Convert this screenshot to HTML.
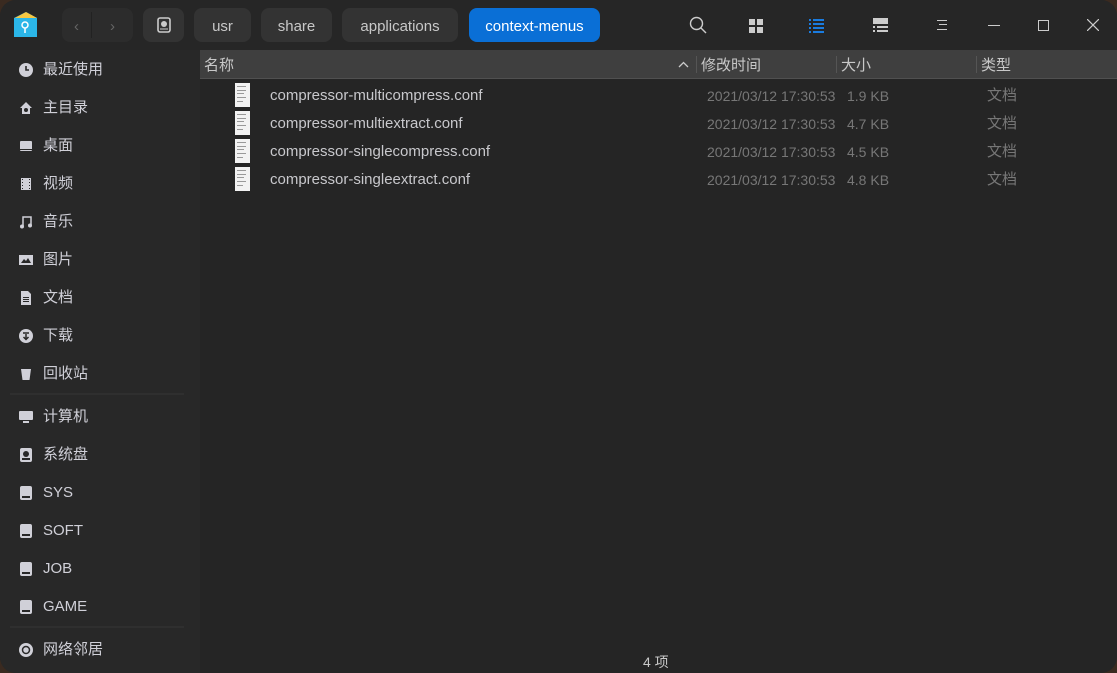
<!DOCTYPE html>
<html><head><meta charset="utf-8"><style>
*{margin:0;padding:0;box-sizing:border-box}
body{width:1117px;height:673px;background:#3a2a20;overflow:hidden;font-family:"Liberation Sans","Noto Sans CJK SC",sans-serif}
.win{position:absolute;left:0;top:0;width:1117px;height:673px;border-radius:16px;background:#252525;overflow:hidden}
.title{position:absolute;left:0;top:0;width:1117px;height:50px;background:#262626}
.btn{position:absolute;top:8px;height:34px;border-radius:8px;background:#333;color:#c8c8c8;font-size:15px;line-height:37px;text-align:center}
.side{position:absolute;left:0;top:50px;width:200px;height:623px;background:#282828}
.it{position:absolute;left:18px;height:24px;color:#d0d0d8;font-size:15px;line-height:24px;display:flex;align-items:center}
.it svg{width:16px;height:16px;margin-right:9px}
.sep{position:absolute;left:10px;width:174px;height:2px;background:#2f2f2f}
.hdr{position:absolute;left:200px;top:50px;width:917px;height:29px;background:#3f3f3f;border-bottom:1px solid #505050;color:#c8c8c8;font-size:15px;line-height:31px}
.hdr span{position:absolute}
.vs{position:absolute;top:6px;width:1px;height:17px;background:#555}
.row{position:absolute;left:200px;width:917px;height:28px;font-size:15px;line-height:30px}
.row .n{position:absolute;left:70px;color:#c8c8cc}
.row .d{position:absolute;left:507px;color:#777;font-size:14px}
.row .s{position:absolute;left:647px;color:#777;font-size:14px}
.row .t{position:absolute;left:787px;color:#777}
.row .f{position:absolute;left:35px;top:2px;width:15px;height:24px;background:#f2f2f2}
.f i{position:absolute;left:2px;height:1px;background:#999;width:9px}
</style></head><body><div class="win">
<div class="title">
<svg style="position:absolute;left:12px;top:10px" width="27" height="29" viewBox="0 0 27 29"><path d="M2 8 L14 2 L25 8 V27 H2Z" fill="#3cc7f0"/><rect x="2" y="8" width="23" height="19" fill="#2bb6e8"/><path d="M14 2 L25 8 H3Z" fill="#f5c642"/><circle cx="13" cy="15" r="3" fill="none" stroke="#fff" stroke-width="1.5"/><path d="M13 18v5" stroke="#fff" stroke-width="1.5"/></svg>
<div class="btn" style="left:62px;width:71px;background:#2c2c2c"><span style="position:absolute;left:12px;color:#666">‹</span><span style="position:absolute;left:29px;top:4px;width:1px;height:26px;background:#222"></span><span style="position:absolute;left:48px;color:#666">›</span></div>
<div class="btn" style="left:143px;width:41px"><svg width="14" height="16" viewBox="0 0 14 16" style="margin-top:9px"><rect x="1" y="1" width="12" height="14" rx="2" fill="none" stroke="#ccc" stroke-width="1.6"/><circle cx="7" cy="7" r="3" fill="#ccc"/><path d="M3 12h8" stroke="#ccc"/></svg></div>
<div class="btn" style="left:194px;width:57px">usr</div>
<div class="btn" style="left:261px;width:71px">share</div>
<div class="btn" style="left:342px;width:116px">applications</div>
<div class="btn" style="left:469px;width:131px;background:#0a6fd6;color:#fff">context-menus</div>
<svg style="position:absolute;left:689px;top:16px" width="18" height="18" viewBox="0 0 18 18"><circle cx="7.5" cy="7.5" r="6" fill="none" stroke="#ccc" stroke-width="1.4"/><path d="M12 12l5 5" stroke="#ccc" stroke-width="1.4"/></svg>
<svg style="position:absolute;left:749px;top:19px" width="14" height="14"><rect width="6" height="6" fill="#ccc"/><rect x="8" width="6" height="6" fill="#ccc"/><rect y="8" width="6" height="6" fill="#ccc"/><rect x="8" y="8" width="6" height="6" fill="#ccc"/></svg>
<svg style="position:absolute;left:809px;top:19px" width="15" height="14"><g fill="#1a7ce0"><rect width="2" height="2"/><rect x="4" width="11" height="2"/><rect y="4" width="2" height="2"/><rect x="4" y="4" width="11" height="2"/><rect y="8" width="2" height="2"/><rect x="4" y="8" width="11" height="2"/><rect y="12" width="2" height="2"/><rect x="4" y="12" width="11" height="2"/></g></svg>
<svg style="position:absolute;left:873px;top:18px" width="15" height="15"><g fill="#ccc"><rect width="15" height="6"/><rect y="8" width="2" height="2"/><rect x="4" y="8" width="11" height="2"/><rect y="12" width="2" height="2"/><rect x="4" y="12" width="11" height="2"/></g></svg>
<svg style="position:absolute;left:937px;top:19px" width="12" height="12"><g fill="#ccc"><rect y="1" width="10" height="1"/><rect x="2" y="5" width="8" height="1"/><rect y="10" width="10" height="1"/></g></svg>
<div style="position:absolute;left:988px;top:25px;width:12px;height:1px;background:#ccc"></div>
<div style="position:absolute;left:1038px;top:20px;width:11px;height:11px;border:1px solid #ccc"></div>
<svg style="position:absolute;left:1087px;top:19px" width="12" height="12"><path d="M0 0L12 12M12 0L0 12" stroke="#ccc" stroke-width="1.2"/></svg>
</div>
<div class="side">
<div class="it" style="top:8px"><svg viewBox="0 0 16 16"><circle cx="8" cy="8" r="7" fill="#d0d0d8"/><path d="M8 4v4h3" stroke="#282828" stroke-width="1.6" fill="none"/></svg>最近使用</div>
<div class="it" style="top:46px"><svg viewBox="0 0 16 16"><path d="M8 2L14 8H12V14H4V8H2Z" fill="#d0d0d8"/><circle cx="8" cy="10" r="2" fill="#282828"/></svg>主目录</div>
<div class="it" style="top:84px"><svg viewBox="0 0 16 16"><rect x="2" y="3" width="12" height="10" rx="1" fill="#d0d0d8"/><rect x="2" y="11" width="12" height="1" fill="#282828"/></svg>桌面</div>
<div class="it" style="top:122px"><svg viewBox="0 0 16 16"><rect x="3" y="2" width="10" height="12" fill="#d0d0d8"/><g fill="#282828"><rect x="4" y="3" width="1" height="1"/><rect x="4" y="6" width="1" height="1"/><rect x="4" y="9" width="1" height="1"/><rect x="4" y="12" width="1" height="1"/><rect x="11" y="3" width="1" height="1"/><rect x="11" y="6" width="1" height="1"/><rect x="11" y="9" width="1" height="1"/><rect x="11" y="12" width="1" height="1"/></g></svg>视频</div>
<div class="it" style="top:160px"><svg viewBox="0 0 16 16"><path d="M5 12V3h8v9" stroke="#d0d0d8" stroke-width="1.5" fill="none"/><circle cx="4" cy="12.5" r="2" fill="#d0d0d8"/><circle cx="12" cy="11.5" r="2" fill="#d0d0d8"/></svg>音乐</div>
<div class="it" style="top:198px"><svg viewBox="0 0 16 16"><rect x="1" y="3" width="14" height="10" fill="#d0d0d8"/><path d="M3 11l3-4 2 2 2-3 3 5z" fill="#282828"/></svg>图片</div>
<div class="it" style="top:236px"><svg viewBox="0 0 16 16"><path d="M3 1h7l3 3v11H3z" fill="#d0d0d8"/><g fill="#282828"><rect x="5" y="7" width="6" height="1"/><rect x="5" y="9" width="6" height="1"/><rect x="5" y="11" width="6" height="1"/></g></svg>文档</div>
<div class="it" style="top:274px"><svg viewBox="0 0 16 16"><circle cx="8" cy="8" r="7" fill="#d0d0d8"/><path d="M5 5h6M8 6v5M5.5 9l2.5 2.5 2.5-2.5" stroke="#282828" stroke-width="1.5" fill="none"/></svg>下载</div>
<div class="it" style="top:312px"><svg viewBox="0 0 16 16"><path d="M3 3h10l-1.5 11h-7z" fill="#d0d0d8"/></svg>回收站</div>
<div class="sep" style="top:343px"></div>
<div class="it" style="top:355px"><svg viewBox="0 0 16 16"><rect x="1" y="2" width="14" height="9" rx="1" fill="#d0d0d8"/><rect x="5" y="12" width="6" height="2" fill="#d0d0d8"/></svg>计算机</div>
<div class="it" style="top:393px"><svg viewBox="0 0 16 16"><rect x="2" y="1" width="12" height="14" rx="2" fill="#d0d0d8"/><circle cx="8" cy="7" r="3" fill="#282828"/><rect x="4" y="11" width="8" height="2" fill="#282828"/></svg>系统盘</div>
<div class="it" style="top:431px"><svg viewBox="0 0 16 16"><rect x="2" y="1" width="12" height="14" rx="2" fill="#d0d0d8"/><rect x="4" y="11" width="8" height="2" fill="#282828"/></svg>SYS</div>
<div class="it" style="top:469px"><svg viewBox="0 0 16 16"><rect x="2" y="1" width="12" height="14" rx="2" fill="#d0d0d8"/><rect x="4" y="11" width="8" height="2" fill="#282828"/></svg>SOFT</div>
<div class="it" style="top:507px"><svg viewBox="0 0 16 16"><rect x="2" y="1" width="12" height="14" rx="2" fill="#d0d0d8"/><rect x="4" y="11" width="8" height="2" fill="#282828"/></svg>JOB</div>
<div class="it" style="top:545px"><svg viewBox="0 0 16 16"><rect x="2" y="1" width="12" height="14" rx="2" fill="#d0d0d8"/><rect x="4" y="11" width="8" height="2" fill="#282828"/></svg>GAME</div>
<div class="sep" style="top:576px"></div>
<div class="it" style="top:588px"><svg viewBox="0 0 16 16"><circle cx="8" cy="8" r="7" fill="#d0d0d8"/><circle cx="8" cy="8" r="3.5" fill="none" stroke="#282828" stroke-width="1.5"/></svg>网络邻居</div>
</div>
<div class="hdr"><span style="left:4px">名称</span><svg style="position:absolute;left:478px;top:11px" width="11" height="7"><path d="M1 6l4.5-4.5L10 6" stroke="#ccc" stroke-width="1.3" fill="none"/></svg><div class="vs" style="left:496px"></div><span style="left:501px">修改时间</span><div class="vs" style="left:636px"></div><span style="left:641px">大小</span><div class="vs" style="left:776px"></div><span style="left:781px">类型</span></div>
<div class="row" style="top:81px"><div class="f"><i style="top:3px"></i><i style="top:7px"></i><i style="top:10px;width:7px"></i><i style="top:14px"></i><i style="top:18px;width:6px"></i></div><span class="n">compressor-multicompress.conf</span><span class="d">2021/03/12 17:30:53</span><span class="s">1.9 KB</span><span class="t">文档</span></div>
<div class="row" style="top:109px"><div class="f"><i style="top:3px"></i><i style="top:7px"></i><i style="top:10px;width:7px"></i><i style="top:14px"></i><i style="top:18px;width:6px"></i></div><span class="n">compressor-multiextract.conf</span><span class="d">2021/03/12 17:30:53</span><span class="s">4.7 KB</span><span class="t">文档</span></div>
<div class="row" style="top:137px"><div class="f"><i style="top:3px"></i><i style="top:7px"></i><i style="top:10px;width:7px"></i><i style="top:14px"></i><i style="top:18px;width:6px"></i></div><span class="n">compressor-singlecompress.conf</span><span class="d">2021/03/12 17:30:53</span><span class="s">4.5 KB</span><span class="t">文档</span></div>
<div class="row" style="top:165px"><div class="f"><i style="top:3px"></i><i style="top:7px"></i><i style="top:10px;width:7px"></i><i style="top:14px"></i><i style="top:18px;width:6px"></i></div><span class="n">compressor-singleextract.conf</span><span class="d">2021/03/12 17:30:53</span><span class="s">4.8 KB</span><span class="t">文档</span></div>
<div style="position:absolute;left:643px;top:652px;color:#c8c8c8;font-size:14px">4 项</div>
</div></body></html>
